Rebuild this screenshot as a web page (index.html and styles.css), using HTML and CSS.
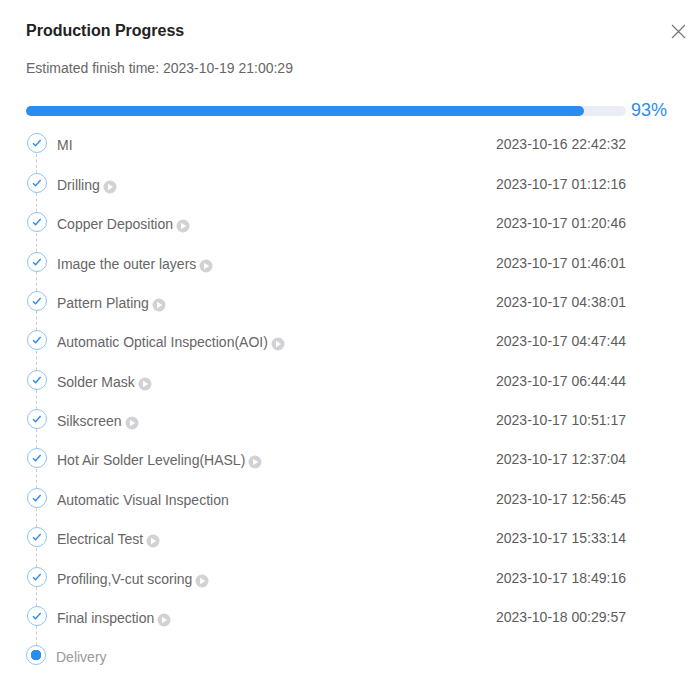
FILE: index.html
```html
<!DOCTYPE html>
<html lang="en">

<head>
    <meta charset="UTF-8">
    <title>Production Progress</title>
    <link rel="stylesheet" href="styles.css">
</head>

<body>
    <svg class="iconDefs" width="0" height="0">
        <symbol id="check" viewBox="0 0 22 22">
            <circle cx="11" cy="11" r="9.5" fill="#fff" stroke="#8cc4f8" stroke-width="1"></circle>
            <path d="M7 11.2l2.6 2.6L14.6 8" fill="none" stroke="#2b8cef" stroke-width="1.4"></path>
        </symbol>
        <symbol id="play" viewBox="0 0 14 14">
            <circle cx="7" cy="7" r="6.5" fill="#d2d2d6"></circle>
            <path d="M5 3.8v6.4l5.2-3.2z" fill="#fff"></path>
        </symbol>
    </svg>
    <div class="dialog">
        <div class="header">
            <h1>Production Progress</h1>
            <button class="closeButton" aria-label="Close">
                <svg width="15" height="15" viewBox="0 0 15 15">
                    <path d="M1 1l13 13M14 1L1 14" stroke="#777" stroke-width="1.2"></path>
                </svg>
            </button>
        </div>
        <p class="estimate">Estimated finish time: 2023-10-19 21:00:29</p>
        <div class="progress">
            <div class="track">
                <div class="fill"></div>
            </div>
            <span class="percent">93%</span>
        </div>
        <ul class="steps">
            <li class="step">
                <svg class="stepIcon"><use href="#check"></use></svg>
                <span class="stepName">MI</span>
                <span class="stepTime">2023-10-16 22:42:32</span>
            </li>
            <li class="step">
                <svg class="stepIcon"><use href="#check"></use></svg>
                <span class="stepName">Drilling<svg class="playIcon"><use href="#play"></use></svg></span>
                <span class="stepTime">2023-10-17 01:12:16</span>
            </li>
            <li class="step">
                <svg class="stepIcon"><use href="#check"></use></svg>
                <span class="stepName">Copper Deposition<svg class="playIcon"><use href="#play"></use></svg></span>
                <span class="stepTime">2023-10-17 01:20:46</span>
            </li>
            <li class="step">
                <svg class="stepIcon"><use href="#check"></use></svg>
                <span class="stepName">Image the outer layers<svg class="playIcon"><use href="#play"></use></svg></span>
                <span class="stepTime">2023-10-17 01:46:01</span>
            </li>
            <li class="step">
                <svg class="stepIcon"><use href="#check"></use></svg>
                <span class="stepName">Pattern Plating<svg class="playIcon"><use href="#play"></use></svg></span>
                <span class="stepTime">2023-10-17 04:38:01</span>
            </li>
            <li class="step">
                <svg class="stepIcon"><use href="#check"></use></svg>
                <span class="stepName">Automatic Optical Inspection(AOI)<svg class="playIcon"><use href="#play"></use></svg></span>
                <span class="stepTime">2023-10-17 04:47:44</span>
            </li>
            <li class="step">
                <svg class="stepIcon"><use href="#check"></use></svg>
                <span class="stepName">Solder Mask<svg class="playIcon"><use href="#play"></use></svg></span>
                <span class="stepTime">2023-10-17 06:44:44</span>
            </li>
            <li class="step">
                <svg class="stepIcon"><use href="#check"></use></svg>
                <span class="stepName">Silkscreen<svg class="playIcon"><use href="#play"></use></svg></span>
                <span class="stepTime">2023-10-17 10:51:17</span>
            </li>
            <li class="step">
                <svg class="stepIcon"><use href="#check"></use></svg>
                <span class="stepName">Hot Air Solder Leveling(HASL)<svg class="playIcon"><use href="#play"></use></svg></span>
                <span class="stepTime">2023-10-17 12:37:04</span>
            </li>
            <li class="step">
                <svg class="stepIcon"><use href="#check"></use></svg>
                <span class="stepName">Automatic Visual Inspection</span>
                <span class="stepTime">2023-10-17 12:56:45</span>
            </li>
            <li class="step">
                <svg class="stepIcon"><use href="#check"></use></svg>
                <span class="stepName">Electrical Test<svg class="playIcon"><use href="#play"></use></svg></span>
                <span class="stepTime">2023-10-17 15:33:14</span>
            </li>
            <li class="step">
                <svg class="stepIcon"><use href="#check"></use></svg>
                <span class="stepName">Profiling,V-cut scoring<svg class="playIcon"><use href="#play"></use></svg></span>
                <span class="stepTime">2023-10-17 18:49:16</span>
            </li>
            <li class="step">
                <svg class="stepIcon"><use href="#check"></use></svg>
                <span class="stepName">Final inspection<svg class="playIcon"><use href="#play"></use></svg></span>
                <span class="stepTime">2023-10-18 00:29:57</span>
            </li>
            <li class="step current">
                <span class="currentIcon"></span>
                <span class="stepName">Delivery</span>
            </li>
        </ul>
    </div>
</body>

</html>
```
FILE: styles.css
```css
html,
body {
    margin: 0;
    height: 100%;
    overflow: hidden;
}

body {
    font-family: "Liberation Sans", Arial, sans-serif;
    font-size: 14px;
    background-color: #fff;
    color: #666;
}

.iconDefs {
    position: absolute;
}

.dialog {
    padding: 21px 12px 0 26px;
}

.header {
    display: flex;
    justify-content: space-between;
    align-items: center;
    height: 20px;
}

h1 {
    margin: 0;
    font-size: 16px;
    line-height: 20px;
    color: #222;
}

.closeButton {
    background: none;
    border: none;
    padding: 0;
    width: 15px;
    height: 15px;
    display: block;
    cursor: pointer;
}

.estimate {
    margin: 17px 0 0;
    line-height: 20px;
}

.progress {
    display: flex;
    align-items: center;
    margin-top: 21px;
    height: 24px;
}

.track {
    width: 600px;
    height: 10px;
    border-radius: 5px;
    background: #ebedf5;
}

.fill {
    width: 93%;
    height: 100%;
    border-radius: 5px;
    background: #2b8cef;
}

.percent {
    margin-left: 5px;
    font-size: 18px;
    color: #2b8cef;
    position: relative;
    top: -1px;
}

.steps {
    list-style: none;
    margin: 2.8px 0 0;
    padding: 0;
}

.step {
    display: flex;
    align-items: center;
    position: relative;
    width: 600px;
    height: 39.38px;
    color: #666;
}

/* dashed line down to the next step */
.step:not(.current)::after {
    content: "";
    position: absolute;
    left: 10px;
    top: 28px;
    height: 30px;
    border-left: 1px dashed #ccc;
}

.stepIcon {
    width: 22px;
    height: 22px;
    flex: none;
    position: relative;
    top: -2px;
    z-index: 1;
}

.stepName {
    display: flex;
    align-items: center;
    margin-left: 9px;
    flex: 1;
}

.stepTime {
    color: #5c5c5c;
    position: relative;
    top: -1px;
}

.playIcon {
    width: 14px;
    height: 14px;
    margin-left: 3px;
    position: relative;
    top: 2px;
}

.current {
    color: #999;
}

.current .stepName {
    margin-left: 10px;
}

.currentIcon {
    width: 20px;
    height: 20px;
    flex: none;
    box-sizing: border-box;
    border: 1px solid #8cc4f8;
    border-radius: 50%;
    background: radial-gradient(circle, #2b8cef 0 5px, #fff 5.5px);
    position: relative;
    top: -2px;
}
```
